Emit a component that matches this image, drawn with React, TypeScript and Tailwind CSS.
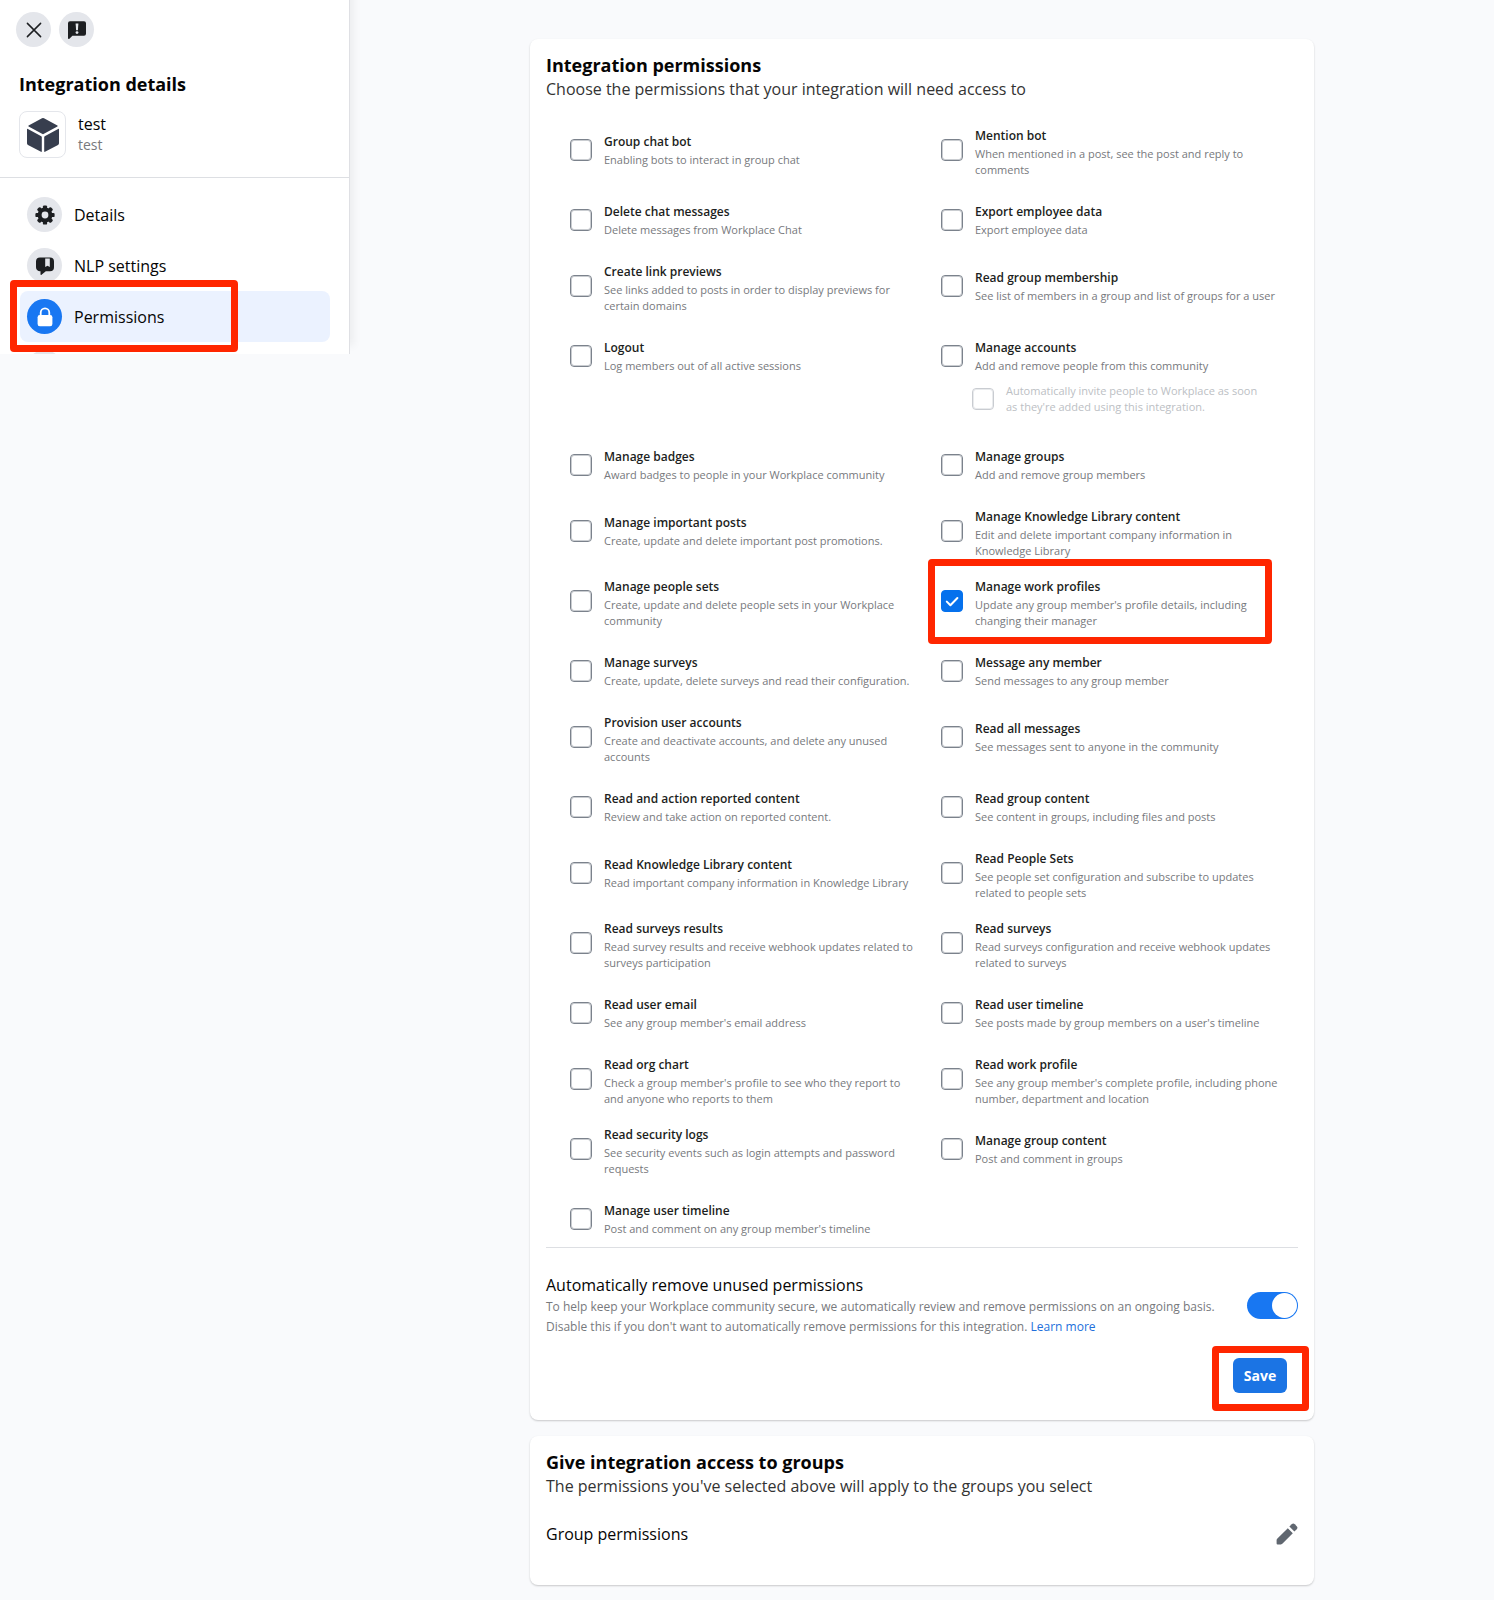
import { useState } from 'react';
import type { ReactNode } from 'react';
import { clsx } from 'clsx';

interface Permission {
  id: string;
  title: string;
  description: string;
  highlighted?: boolean;
  option?: string;
}

const permissions: Permission[] = [
  { id: 'group-chat-bot', title: 'Group chat bot', description: 'Enabling bots to interact in group chat' },
  { id: 'mention-bot', title: 'Mention bot', description: 'When mentioned in a post, see the post and reply to comments' },
  { id: 'delete-chat', title: 'Delete chat messages', description: 'Delete messages from Workplace Chat' },
  { id: 'export-employee', title: 'Export employee data', description: 'Export employee data' },
  { id: 'link-previews', title: 'Create link previews', description: 'See links added to posts in order to display previews for certain domains' },
  { id: 'read-membership', title: 'Read group membership', description: 'See list of members in a group and list of groups for a user' },
  { id: 'logout', title: 'Logout', description: 'Log members out of all active sessions' },
  {
    id: 'manage-accounts',
    title: 'Manage accounts',
    description: 'Add and remove people from this community',
    option: "Automatically invite people to Workplace as soon as they're added using this integration.",
  },
  { id: 'manage-badges', title: 'Manage badges', description: 'Award badges to people in your Workplace community' },
  { id: 'manage-groups', title: 'Manage groups', description: 'Add and remove group members' },
  { id: 'manage-posts', title: 'Manage important posts', description: 'Create, update and delete important post promotions.' },
  { id: 'manage-library', title: 'Manage Knowledge Library content', description: 'Edit and delete important company information in Knowledge Library' },
  { id: 'manage-people-sets', title: 'Manage people sets', description: 'Create, update and delete people sets in your Workplace community' },
  {
    id: 'manage-profiles',
    title: 'Manage work profiles',
    description: "Update any group member's profile details, including changing their manager",
    highlighted: true,
  },
  { id: 'manage-surveys', title: 'Manage surveys', description: 'Create, update, delete surveys and read their configuration.' },
  { id: 'message-member', title: 'Message any member', description: 'Send messages to any group member' },
  { id: 'provision', title: 'Provision user accounts', description: 'Create and deactivate accounts, and delete any unused accounts' },
  { id: 'read-messages', title: 'Read all messages', description: 'See messages sent to anyone in the community' },
  { id: 'read-reported', title: 'Read and action reported content', description: 'Review and take action on reported content.' },
  { id: 'read-group-content', title: 'Read group content', description: 'See content in groups, including files and posts' },
  { id: 'read-library', title: 'Read Knowledge Library content', description: 'Read important company information in Knowledge Library' },
  { id: 'read-people-sets', title: 'Read People Sets', description: 'See people set configuration and subscribe to updates related to people sets' },
  { id: 'read-survey-results', title: 'Read surveys results', description: 'Read survey results and receive webhook updates related to surveys participation' },
  { id: 'read-surveys', title: 'Read surveys', description: 'Read surveys configuration and receive webhook updates related to surveys' },
  { id: 'read-email', title: 'Read user email', description: "See any group member's email address" },
  { id: 'read-timeline', title: 'Read user timeline', description: "See posts made by group members on a user's timeline" },
  { id: 'read-org-chart', title: 'Read org chart', description: "Check a group member's profile to see who they report to and anyone who reports to them" },
  { id: 'read-work-profile', title: 'Read work profile', description: "See any group member's complete profile, including phone number, department and location" },
  { id: 'read-security', title: 'Read security logs', description: 'See security events such as login attempts and password requests' },
  { id: 'manage-group-content', title: 'Manage group content', description: 'Post and comment in groups' },
  { id: 'manage-timeline', title: 'Manage user timeline', description: "Post and comment on any group member's timeline" },
];

const CloseIcon = () => (
  <svg viewBox="0 0 16 16" className="size-4" fill="none" stroke="#1c1e21" strokeWidth="1.5" strokeLinecap="round">
    <path d="M1.4 1.4l13.2 13.2M14.6 1.4L1.4 14.6" />
  </svg>
);

const FeedbackIcon = () => (
  <svg viewBox="0 0 20 20" className="size-5">
    <path d="M3 1.2h14a2 2 0 0 1 2 2v10.6a2 2 0 0 1-2 2H5.4l-3 3c-.6.5-1.4.2-1.4-.6V3.2a2 2 0 0 1 2-2z" fill="#1c1e21" />
    <path d="M8.6 3.6h2.8l-.5 6.6H9.1z" fill="#e4e6eb" />
    <circle cx="10" cy="12.6" r="1.4" fill="#e4e6eb" />
  </svg>
);

const CubeIcon = () => (
  <svg viewBox="0 0 34 36" className="h-9 w-[34px]" fill="#373e4e">
    <path d="M16 1.2a2 2 0 0 1 2 0l13.4 7.3a.5.5 0 0 1 0 .9L17.5 17a1 1 0 0 1-1 0L2.6 9.4a.5.5 0 0 1 0-.9z" />
    <path d="M1 12.4a.6.6 0 0 1 .9-.5l13.4 7.4a1 1 0 0 1 .5.9v14.2a.5.5 0 0 1-.8.4L2 28a2 2 0 0 1-1-1.7z" />
    <path d="M33 12.4a.6.6 0 0 0-.9-.5l-13.4 7.4a1 1 0 0 0-.5.9v14.2a.5.5 0 0 0 .8.4L32 28a2 2 0 0 0 1-1.7z" />
  </svg>
);

const GearIcon = () => (
  <svg viewBox="-10 -10 20 20" className="size-5" fill="#1c1e21">
    {[0, 45, 90, 135].map((angle) => (
      <rect key={angle} x="-2.1" y="-9.6" width="4.2" height="19.2" rx="1.2" transform={`rotate(${angle})`} />
    ))}
    <circle r="7.4" />
    <circle r="3.4" fill="#e4e6eb" />
  </svg>
);

const NlpIcon = () => (
  <svg viewBox="0 0 20 20" className="size-5">
    <path d="M5 1.4h10a4 4 0 0 1 4 4v5.8a4 4 0 0 1-4 4h-4.2l-4.3 3.5c-.5.4-1 .1-1-.5v-3A4 4 0 0 1 1 11.2V5.4a4 4 0 0 1 4-4z" fill="#1c1e21" />
    <path d="M10.2 2.6h4.6v8.4l-2.3-1.2-2.3 1.2z" fill="#e4e6eb" />
  </svg>
);

const LockIcon = () => (
  <svg viewBox="0 0 20 20" className="size-5">
    <rect x="2.6" y="8" width="14.8" height="11.2" rx="2.2" fill="#fff" />
    <path d="M5.7 9V5.7a4.3 4.3 0 0 1 8.6 0V9" fill="none" stroke="#fff" strokeWidth="1.8" />
  </svg>
);

const PencilIcon = () => (
  <svg viewBox="0 0 22 22" className="size-[22px]" fill="#606770">
    <path d="M11.8 5.2l5 5L6.6 20.6a2.4 2.4 0 0 1-1.7.8H1.6a1 1 0 0 1-1-1v-3.3c0-.6.3-1.2.8-1.7z" />
    <path d="M13.4 3.6l2.3-2.3a2.2 2.2 0 0 1 3.1 0l1.9 1.9a2.2 2.2 0 0 1 0 3.1l-2.3 2.3z" />
  </svg>
);

const Highlight = ({ className }: { className: string }) => (
  <span aria-hidden="true" className={clsx('pointer-events-none absolute rounded-sm border-7 border-[#ff2600]', className)} />
);

interface CheckboxProps {
  id: string;
  checked: boolean;
  disabled?: boolean;
  onChange?: () => void;
}

const Checkbox = ({ id, checked, disabled, onChange }: CheckboxProps) => (
  <span className="relative block size-[22px] shrink-0">
    <input
      id={id}
      type="checkbox"
      checked={checked}
      disabled={disabled}
      onChange={onChange}
      className="peer block size-full appearance-none rounded-[4px] border border-[#7b828c] bg-white outline -outline-offset-2 outline-[#7b828c]/40 checked:border-[#0571ed] checked:bg-[#0571ed] checked:outline-[#0571ed] disabled:border-[#c9ccd1] disabled:outline-[#c9ccd1]/40"
    />
    <svg
      viewBox="0 0 22 22"
      className="pointer-events-none absolute inset-0 hidden peer-checked:block"
      fill="none"
      stroke="#fff"
      strokeWidth="2"
      strokeLinecap="round"
      strokeLinejoin="round"
    >
      <path d="M5.8 11.6l3.6 3.6 7-7.2" />
    </svg>
  </span>
);

interface NavItemProps {
  icon?: ReactNode;
  label: string;
  active?: boolean;
}

const NavItem = ({ icon, label, active }: NavItemProps) => (
  <li className="relative">
    <a
      href="#"
      aria-current={active ? 'page' : undefined}
      className={clsx('flex h-[51px] items-center gap-3 rounded-lg px-[7px] text-base text-[#050505]', active && 'bg-[#ebf2ff]')}
    >
      <span className={clsx('flex size-[35px] items-center justify-center rounded-full', active ? 'bg-[#1877f2]' : 'bg-[#e4e6eb]')}>
        {icon}
      </span>
      {label}
    </a>
    {active && <Highlight className="-top-[11px] -left-[10px] h-[72px] w-[228px]" />}
  </li>
);

const Sidebar = () => (
  <aside className="h-[354px] w-[350px] shrink-0 overflow-hidden border-r border-[#dfe0e4] bg-white shadow-[4px_-8px_8px_rgba(0,0,0,0.05)]">
    <div className="flex gap-2 px-4 pt-3">
      <button type="button" aria-label="Close" className="flex size-[35px] items-center justify-center rounded-full bg-[#e4e6eb]">
        <CloseIcon />
      </button>
      <button type="button" aria-label="Send feedback" className="flex size-[35px] items-center justify-center rounded-full bg-[#e4e6eb]">
        <FeedbackIcon />
      </button>
    </div>
    <h1 className="mt-[25px] px-[19px] text-lg leading-6 font-bold text-[#050505]">Integration details</h1>
    <div className="mt-[15px] flex items-center gap-3 border-b border-[#dddfe3] px-[19px] pb-[19px]">
      <div className="flex size-[47px] items-center justify-center rounded-lg border border-[#e4e6eb]">
        <CubeIcon />
      </div>
      <div>
        <p className="text-base leading-5 text-[#050505]">test</p>
        <p className="text-sm leading-[22px] text-[#77797d]">test</p>
      </div>
    </div>
    <nav>
      <ul className="pt-[11px] pr-[19px] pl-5">
        <NavItem icon={<GearIcon />} label="Details" />
        <NavItem icon={<NlpIcon />} label="NLP settings" />
        <NavItem icon={<LockIcon />} label="Permissions" active />
        <li className="px-[7px] pt-2">
          <span className="block size-[35px] rounded-full bg-[#e4e6eb]" />
        </li>
      </ul>
    </nav>
  </aside>
);

interface PermissionItemProps {
  permission: Permission;
  checked: boolean;
  onToggle: () => void;
}

const PermissionItem = ({ permission, checked, onToggle }: PermissionItemProps) => (
  <div className="relative">
    <div className="flex items-start gap-3">
      <div className="pt-[13px]">
        <Checkbox id={permission.id} checked={checked} onChange={onToggle} />
      </div>
      <label htmlFor={permission.id} className="flex min-h-12 flex-1 flex-col justify-center">
        <span className="text-xs leading-5 font-semibold text-[#1c1e21]">{permission.title}</span>
        <span className="text-[11px] leading-4 text-[#77797d]">{permission.description}</span>
      </label>
    </div>
    {permission.option && (
      <div className="mt-[3px] flex items-center gap-3 pr-5 pb-2 pl-[31px]">
        <Checkbox id={`${permission.id}-option`} checked={false} disabled />
        <label htmlFor={`${permission.id}-option`} className="text-[11px] leading-4 text-[#bcc0c4]">
          {permission.option}
        </label>
      </div>
    )}
    {permission.highlighted && <Highlight className="-top-[18px] right-4 -bottom-[15px] -left-[13px]" />}
  </div>
);

const App = () => {
  const [selected, setSelected] = useState<string[]>(['manage-profiles']);
  const [autoRemove, setAutoRemove] = useState(true);

  const toggle = (id: string) => {
    setSelected((current) => (current.includes(id) ? current.filter((item) => item !== id) : [...current, id]));
  };

  return (
    <div className="flex min-h-screen items-start bg-[#f9fafc] font-['Open_Sans','Noto_Sans',sans-serif]">
      <Sidebar />

      <main className="flex flex-1 justify-center pt-[39px] pb-[15px]">
        <div className="w-full max-w-[784px] space-y-4">
          <section className="rounded-lg bg-white px-4 pt-[14px] pb-[27px] shadow-[0_1px_2px_rgba(0,0,0,0.2)]">
            <h2 className="text-lg leading-6 font-bold text-[#050505]">Integration permissions</h2>
            <p className="text-base leading-6 text-[#333]">Choose the permissions that your integration will need access to</p>

            <div className="mt-[25px] border-b border-[#dddfe3] pb-1">
              <div className="grid grid-cols-2 gap-x-6 gap-y-[18px] pr-[10px] pl-6">
                {permissions.map((permission) => (
                  <PermissionItem
                    key={permission.id}
                    permission={permission}
                    checked={selected.includes(permission.id)}
                    onToggle={() => toggle(permission.id)}
                  />
                ))}
              </div>
            </div>

            <div className="mt-[25px] flex items-center justify-between">
              <div className="text-xs leading-5 text-[#77797d]">
                <label htmlFor="auto-remove" className="block text-base leading-6 text-[#050505]">
                  Automatically remove unused permissions
                </label>
                <p>To help keep your Workplace community secure, we automatically review and remove permissions on an ongoing basis.</p>
                <p>
                  Disable this if you don't want to automatically remove permissions for this integration.{' '}
                  <a href="#" className="text-[#216fdb]">
                    Learn more
                  </a>
                </p>
              </div>
              <span className="relative h-[27px] w-[51px] shrink-0">
                <input
                  id="auto-remove"
                  type="checkbox"
                  role="switch"
                  checked={autoRemove}
                  onChange={() => setAutoRemove(!autoRemove)}
                  className="peer block size-full appearance-none rounded-full bg-[#bcc0c4] checked:bg-[#1877f2]"
                />
                <span className="pointer-events-none absolute top-px left-px size-[25px] rounded-full bg-white peer-checked:right-px peer-checked:left-auto" />
              </span>
            </div>

            <div className="mt-[21px] flex justify-end pr-[11px]">
              <div className="relative">
                <button type="button" className="h-[35px] w-[54px] rounded-md bg-[#1b74e4] text-sm font-bold text-white">
                  Save
                </button>
                <Highlight className="-top-3 -right-[22px] -bottom-[18px] -left-[21px]" />
              </div>
            </div>
          </section>

          <section className="rounded-lg bg-white px-4 pt-[14px] pb-[39px] shadow-[0_1px_2px_rgba(0,0,0,0.2)]">
            <h2 className="text-lg leading-6 font-bold text-[#050505]">Give integration access to groups</h2>
            <p className="text-base leading-6 text-[#333]">The permissions you've selected above will apply to the groups you select</p>
            <div className="mt-6 flex h-6 items-center justify-between">
              <h3 className="text-base leading-6 text-[#050505]">Group permissions</h3>
              <button type="button" aria-label="Edit group permissions">
                <PencilIcon />
              </button>
            </div>
          </section>
        </div>
      </main>
    </div>
  );
};

export default App;
